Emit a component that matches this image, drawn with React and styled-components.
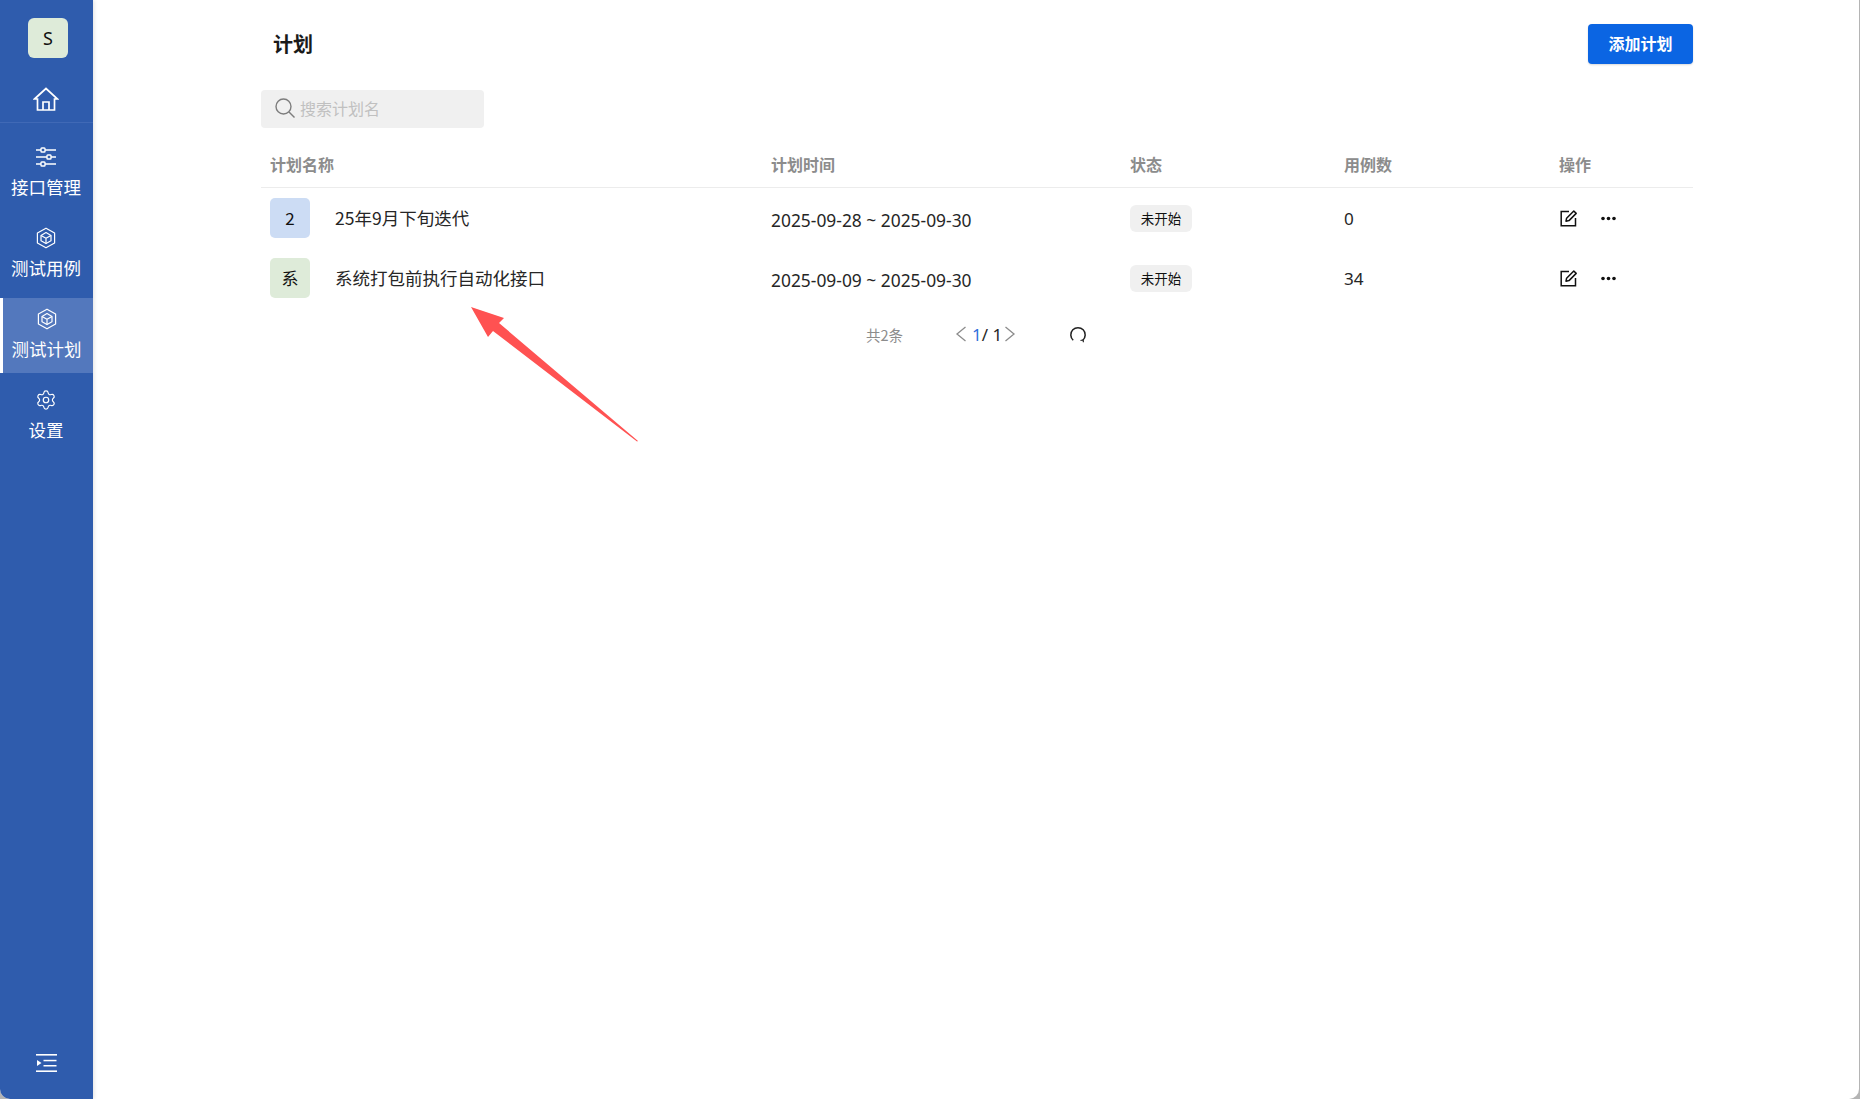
import React from 'react';
import styled, { createGlobalStyle } from 'styled-components';
import { Settings } from 'lucide-react';

const Global = createGlobalStyle`
  html, body { margin: 0; padding: 0; height: 100%; background: #b4b4b4; overflow: hidden; }
  * { box-sizing: border-box; }
  body { font-family: "Noto Sans CJK SC", "Noto Sans", sans-serif; }
`;

const Frame = styled.div`
  position: relative; display: flex; width: 1859px; height: 1099px;
  background: #fff; border-radius: 0 0 10px 10px; overflow: hidden;
`;
const Sidebar = styled.aside`
  width: 93px; flex: none; background: #2f5cad; display: flex; flex-direction: column;
  align-items: stretch; box-shadow: 1px 0 4px rgba(0,0,0,.12); z-index: 1;
`;
const Brand = styled.div`
  height: 123px; padding-top: 18px; display: flex; flex-direction: column; align-items: center;
  border-bottom: 1px solid #4069b6;
`;
const AvatarLogo = styled.div`
  width: 40px; height: 40px; margin-left: 3px; border-radius: 6px; background: #deebd9; color: #111;
  display: flex; align-items: center; justify-content: center; font-size: 18px;
  font-family: "Noto Sans", sans-serif;
`;
const HomeWrap = styled.div`
  margin-top: 29px; margin-right: 1px; height: 24px; line-height: 0;
`;
const Nav = styled.nav`
  display: flex; flex-direction: column; gap: 6px; padding-top: 13px; flex: 1;
`;
const NavItem = styled.div`
  height: 75px; display: flex; flex-direction: column; align-items: center; padding-top: 10px;
  color: #fff; font-size: 17.5px; line-height: 24px; gap: 7px;
  background: ${p => (p.$active ? '#5378bd' : 'transparent')};
  border-left: ${p => (p.$active ? '3px solid #fff' : '0')};
  padding-right: ${p => (p.$active ? '3px' : '1px')};
`;
const NavIcon = styled.span`
  display: block; width: 22px; height: 22px; line-height: 0; color: #fff;
`;
const Collapse = styled.div`
  height: 38px; margin-bottom: 17px; display: flex; justify-content: center; align-items: center;
`;
const Main = styled.main`
  flex: 1; padding: 24px 166px 0 168px; display: flex; flex-direction: column;
`;
const Top = styled.div`
  display: flex; justify-content: space-between; align-items: center; height: 39px; padding-left: 12px;
`;
const Title = styled.h1`
  margin: 0; font-size: 20px; font-weight: 700; color: #1a1a1a;
`;
const AddButton = styled.button`
  width: 105px; height: 40px; border: 0; border-radius: 4px; background: #0b65e3; color: #fff;
  font: 700 16px "Noto Sans CJK SC", sans-serif; padding: 0 0 2px; box-shadow: 0 1px 2px rgba(0,0,0,.15);
`;
const Search = styled.div`
  margin-top: 27px; width: 223px; height: 38px; background: #f0f0f0; border-radius: 4px;
  display: flex; align-items: center; padding-left: 13px; padding-bottom: 3px; gap: 4px; color: #c0c0c0; font-size: 16px;
`;
const rowGrid = `
  display: grid; grid-template-columns: 501px 359px 214px 215px 1fr; align-items: center; padding-left: 9px;
`;
const HeadRow = styled.div`
  ${rowGrid}
  margin-top: 21px; height: 39px; border-bottom: 1px solid #ececec; color: #8c8c8c;
  font-size: 16px; font-weight: 700; padding-bottom: 8px;
`;
const Rows = styled.div`
  padding-top: 10px; display: flex; flex-direction: column; gap: 20px;
`;
const Row = styled.div`
  ${rowGrid}
  height: 40px; color: #262626; font-size: 17.5px;
`;
const NameCell = styled.div`
  display: flex; align-items: center; gap: 25px;
`;
const NameText = styled.span`
  padding-bottom: 2px;
`;
const Badge = styled.div`
  width: 40px; height: 40px; border-radius: 5px; background: ${p => p.$bg}; color: #111;
  display: flex; align-items: center; justify-content: center; font-size: 17px; padding-bottom: 2px;
`;
const DateCell = styled.div`
  padding-top: 3px; font-family: "Noto Sans", sans-serif; font-size: 17.4px;
`;
const StatusTag = styled.span`
  display: inline-flex; width: 62px; height: 27px; background: #f0f0f0; border-radius: 6px;
  align-items: center; justify-content: center; color: #111; font-size: 13.5px;
`;
const CountCell = styled.div`
  font-family: "Noto Sans", sans-serif; font-size: 17.1px;
`;
const Actions = styled.div`
  display: flex; align-items: center; gap: 23px; padding-left: 1px; color: #111; line-height: 0;
`;
const Pager = styled.div`
  margin-top: 21px; display: flex; align-items: center; height: 30px; padding-left: 605px;
  color: #262626; font-size: 14.5px;
`;
const Total = styled.span`
  color: #8c8c8c; width: 89px;
`;
const Pages = styled.div`
  display: flex; align-items: center; font-family: "Noto Sans", sans-serif; font-size: 17px; width: 114px;
`;
const Current = styled.span`
  color: #2f6fdc; margin: 0 0 0 5px;
`;
const Of = styled.span`
  margin-right: 2px; white-space: pre;
`;
const Arrow = styled.svg`
  position: absolute; left: 0; top: 0; pointer-events: none; z-index: 2;
`;

const SlidersIcon = () => (
  <svg width="22" height="22" viewBox="0 0 22 22" fill="none" stroke="#fff" strokeWidth="1.4">
    <path d="M1 4h5M10 4h11M1 11h11M16 11h5M1 18h5M10 18h11" />
    <rect x="6" y="2" width="4" height="4" rx=".8" />
    <rect x="12" y="9" width="4" height="4" rx=".8" />
    <rect x="6" y="16" width="4" height="4" rx=".8" />
  </svg>
);
const HexBox = () => (
  <svg width="22" height="22" viewBox="0 0 22 22" fill="none" stroke="#fff" strokeWidth="1.2" strokeLinejoin="round">
    <path d="M11 1.2 19.6 6v10L11 20.8 2.4 16V6Z" />
    <path d="M11 5.6 16 8.4v5.4L11 16.6 6 13.8V8.4Z" />
    <path d="M6 8.4l5 2.8 5-2.8M11 11.2v5.4" />
  </svg>
);
const Home = () => (
  <svg width="26" height="24" viewBox="0 0 26 24" fill="none" stroke="#fff" strokeWidth="1.7" strokeLinejoin="miter">
    <path d="M1.5 12 13 1.5 24.5 12H21.5V23H4.5V12Z" />
    <path d="M10 23v-8h6v8" />
  </svg>
);
const SearchIcon = () => (
  <svg width="22" height="22" viewBox="0 0 22 22" fill="none" stroke="#7d7d7d" strokeWidth="1.4">
    <circle cx="9.5" cy="9.5" r="7.5" />
    <path d="M15 15l5.5 5.5" />
  </svg>
);
const Outdent = () => (
  <svg width="21" height="18" viewBox="0 0 21 18" fill="#fff">
    <rect x="0" y="0" width="21" height="1.6" />
    <rect x="7.5" y="5.8" width="13" height="1.5" />
    <rect x="7.5" y="11" width="13" height="1.5" />
    <rect x="0" y="16.4" width="21" height="1.6" />
    <path d="M1 6l4.5 3L1 12z" />
  </svg>
);
const EditIcon = () => (
  <svg width="18" height="18" viewBox="0 0 18 18" fill="none" stroke="#111" strokeWidth="1.5">
    <path d="M9 2.5H1.2v14.3h14.3V9" />
    <path d="M6 12.2l.6-3L13.8 2l2.4 2.4L9 11.6z" strokeLinejoin="round" />
  </svg>
);
const Dots = () => (
  <svg width="15" height="5" viewBox="0 0 15 5" fill="#111">
    <circle cx="2" cy="2.5" r="1.8" /><circle cx="7.5" cy="2.5" r="1.8" /><circle cx="13" cy="2.5" r="1.8" />
  </svg>
);
const Chevron = ({ dir }) => (
  <svg width="12" height="16" viewBox="0 0 12 16" fill="none" stroke="#8c8c8c" strokeWidth="1.3">
    <path d={dir === 'left' ? 'M10.5 1 2 8l8.5 7' : 'M1.5 1 10 8l-8.5 7'} />
  </svg>
);
const Refresh = () => (
  <svg width="18" height="18" viewBox="0 0 18 18" fill="none" stroke="#222" strokeWidth="1.5">
    <path d="M4.2 15.2A7.2 7.2 0 1 1 13.8 15.2" />
    <path d="M11.5 15.5l2.6-.6.3 2.4" strokeWidth="1.2" />
  </svg>
);

const navItems = [
  { label: '接口管理', icon: <SlidersIcon /> },
  { label: '测试用例', icon: <HexBox /> },
  { label: '测试计划', icon: <HexBox />, active: true },
  { label: '设置', icon: <Settings size={22} strokeWidth={1.3} /> },
];
const plans = [
  { mark: '2', bg: '#ccdcf4', name: '25年9月下旬迭代', date: '2025-09-28 ~ 2025-09-30', count: '0' },
  { mark: '系', bg: '#deebd9', name: '系统打包前执行自动化接口', date: '2025-09-09 ~ 2025-09-30', count: '34' },
];

export default function App() {
  return (
    <Frame>
      <Global />
      <Sidebar>
        <Brand>
          <AvatarLogo>S</AvatarLogo>
          <HomeWrap><Home /></HomeWrap>
        </Brand>
        <Nav>
          {navItems.map(n => (
            <NavItem key={n.label} $active={n.active}>
              <NavIcon>{n.icon}</NavIcon>
              {n.label}
            </NavItem>
          ))}
        </Nav>
        <Collapse><Outdent /></Collapse>
      </Sidebar>
      <Main>
        <Top>
          <Title>计划</Title>
          <AddButton>添加计划</AddButton>
        </Top>
        <Search><SearchIcon />搜索计划名</Search>
        <HeadRow>
          <div>计划名称</div><div>计划时间</div><div>状态</div><div>用例数</div><div>操作</div>
        </HeadRow>
        <Rows>
          {plans.map(p => (
            <Row key={p.name}>
              <NameCell><Badge $bg={p.bg}>{p.mark}</Badge><NameText>{p.name}</NameText></NameCell>
              <DateCell>{p.date}</DateCell>
              <div><StatusTag>未开始</StatusTag></div>
              <CountCell>{p.count}</CountCell>
              <Actions><EditIcon /><Dots /></Actions>
            </Row>
          ))}
        </Rows>
        <Pager>
          <Total>共2条</Total>
          <Pages>
            <Chevron dir="left" />
            <Current>1</Current><Of>/ 1</Of>
            <Chevron dir="right" />
          </Pages>
          <Refresh />
        </Pager>
      </Main>
      <Arrow width="1859" height="1099" viewBox="0 0 1859 1099">
        <polygon fill="#ff5252" points="471,307 504,318 499,323 638,441 637,441.6 493,331 488,337" />
      </Arrow>
    </Frame>
  );
}
